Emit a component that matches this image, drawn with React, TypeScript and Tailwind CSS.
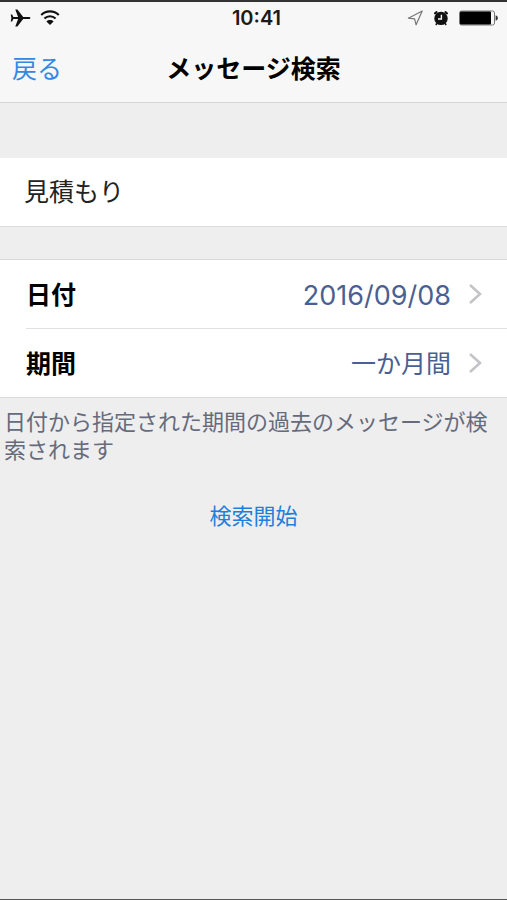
import { useState } from "react";

type RowProps = {
    label: string;
    value: string;
};

function StatusBar() {
    return (
        <div className="grid grid-cols-3 items-center h-8 pl-2.5 pr-1">
            <div className="flex items-center gap-2">
                {/* Airplane */}
                <svg className="w-[22px] h-5" viewBox="2 0 22 20" fill="#111">
                    <path d="M22.4 10c0-.8-.7-1.1-1.6-1.1h-5.6L9.4 1.6H7.3l2.8 7.3H5.4L4.1 6.4H2.7L3.4 10l-.7 3.6h1.4l1.3-2.5h4.7l-2.8 7.3h2.1l5.8-7.3h5.6c.9 0 1.6-.3 1.6-1.1z" />
                </svg>
                {/* Wi-Fi */}
                <svg className="w-5 h-4" viewBox="0 0 20 16" fill="none" stroke="#111" strokeWidth="2.1">
                    <path d="M1.2 5C6.2.2 13.8.2 18.8 5" />
                    <path d="M4.4 8.5c3.2-3 8-3 11.2 0" />
                    <path d="M10 15 6.4 11.5c1.9-1.9 5.3-1.9 7.2 0z" fill="#111" stroke="none" />
                </svg>
            </div>

            <time className="text-center text-[20px] font-semibold text-[#1a1a1a]">10:41</time>

            <div className="flex items-center justify-end gap-2 pr-1">
                {/* Location */}
                <svg className="w-4 h-4" viewBox="0 0 16 16" fill="none" stroke="#777" strokeWidth="1.2">
                    <path d="M15.2 1 1.4 8.2l6.2.6 1.5 6z" strokeLinejoin="round" />
                </svg>
                {/* Alarm */}
                <svg className="w-5 h-4" viewBox="0 0 20 16">
                    <circle cx="10" cy="8.4" r="6.7" fill="#111" />
                    <path d="M4 3.4 5.6 2.1M16 3.4 14.4 2.1" stroke="#111" strokeWidth="2" strokeLinecap="round" />
                    <path d="M5.8 13.4l-.9 1.6M14.2 13.4l.9 1.6" stroke="#111" strokeWidth="1.6" />
                    <path d="M10.4 4.8v4.2H7" stroke="#f7f7f7" strokeWidth="1.4" fill="none" />
                </svg>
                {/* Battery */}
                <svg className="w-10 h-4" viewBox="0 0 40 16">
                    <rect x=".5" y="1" width="35" height="14" rx="2" fill="none" stroke="#777" />
                    <rect x="1" y="1.5" width="31" height="13" rx="1" fill="#000" />
                    <path d="M36.6 5.2c1.6.5 2.2 1.5 2.2 2.8s-.6 2.3-2.2 2.8z" fill="#333" />
                </svg>
            </div>
        </div>
    );
}

function SettingRow({ label, value }: RowProps) {
    return (
        <button type="button" className="flex w-full h-[68px] items-center pr-6 text-left">
            <span className="flex-1 pt-1 text-[25px] font-bold text-black">{label}</span>
            <span className="pt-1 text-[#4a5f92]">{value}</span>
            <svg className="ml-4 w-4 h-6" viewBox="0 0 16 24" fill="none" stroke="#c4c4c8" strokeWidth="2.6">
                <path d="M3 3l10 9-10 9" />
            </svg>
        </button>
    );
}

export default function App() {
    const [keyword, setKeyword] = useState("見積もり");

    return (
        <div className="min-h-screen flex flex-col bg-[#eeeeee] border-t-2 border-b border-t-[#333] border-b-[#555] font-['Inter','Noto_Sans_CJK_JP',sans-serif]">
            {/* Header */}
            <header className="bg-[#f7f7f7] border-b border-[#d6d6d6]">
                <StatusBar />
                <div className="grid grid-cols-[1fr_auto_1fr] items-center h-[68px] px-3 pt-1">
                    <button type="button" className="justify-self-start text-[25px] text-[#3388e6]">
                        戻る
                    </button>
                    <h1 className="text-[25px] font-bold text-black">メッセージ検索</h1>
                </div>
            </header>

            <main>
                {/* Keyword */}
                <input
                    type="text"
                    aria-label="メッセージ検索"
                    className="block w-full h-[69px] mt-[55px] px-6 pb-1 bg-white border-b border-[#dcdcdc] text-[25px] text-[#222] outline-none"
                    value={keyword}
                    onChange={(e) => setKeyword(e.target.value)}
                />

                {/* Date and period */}
                <div className="mt-8 pl-[26px] bg-white border-y border-[#d9d9d9] divide-y divide-[#e2e2e2]">
                    <div className="text-[27px]">
                        <SettingRow label="日付" value="2016/09/08" />
                    </div>
                    <div className="text-[25px]">
                        <SettingRow label="期間" value="一か月間" />
                    </div>
                </div>

                <p className="px-1 pt-2.5 text-[22px] leading-7 text-[#666b7c]">
                    日付から指定された期間の過去のメッセージが検索されます
                </p>

                <div className="flex justify-center pt-9">
                    <button type="button" className="text-[22px] leading-8 text-[#1f7fdc]">
                        検索開始
                    </button>
                </div>
            </main>
        </div>
    );
}
